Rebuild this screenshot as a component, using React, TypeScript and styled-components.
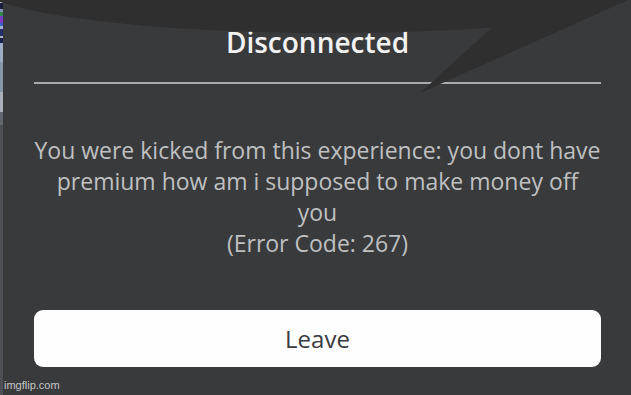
import React from "react";
import styled, { createGlobalStyle } from "styled-components";

const GlobalStyle = createGlobalStyle`
  html, body {
    margin: 0;
    padding: 0;
    background: #393a3c;
  }
`;

const Screen = styled.div`
  position: relative;
  width: 631px;
  height: 395px;
  overflow: hidden;
  display: flex;
  background: #393a3c;
  font-family: "Open Sans", "Noto Sans", sans-serif;
`;

const EdgeStrip = styled.div`
  width: 3px;
  flex-shrink: 0;
  background: linear-gradient(
    to bottom,
    #d6dbe6 0px, #d6dbe6 3px,
    #1c1c3c 3px, #1c1c3c 9px,
    #8292b2 9px, #8292b2 12px,
    #2f8a48 12px, #2f8a48 16px,
    #7a3cc4 16px, #7a3cc4 23px,
    #3a62c2 23px, #3a62c2 26px,
    #a4b2d0 26px, #a4b2d0 29px,
    #22306e 29px, #22306e 36px,
    #a6b4cc 36px, #a6b4cc 38px,
    #1c2250 38px, #1c2250 43px,
    #9eaec6 43px, #9eaec6 62px,
    #8896aa 62px, #8896aa 92px,
    #a9b0bc 92px, #a9b0bc 112px,
    #62666f 112px, #62666f 125px,
    #4d5056 125px, #4d5056 395px
  );
`;

const Dialog = styled.div`
  flex: 1;
  display: flex;
  flex-direction: column;
  padding: 24px 30px 0 31px;
`;

const Title = styled.h1`
  margin: 0;
  font-size: 28px;
  line-height: 37px;
  font-weight: 600;
  color: #f2f2f2;
  text-align: center;
`;

const Divider = styled.div`
  height: 2px;
  margin-top: 21px;
  background: #a9aaab;
`;

const Message = styled.p`
  margin: 51px 0 0;
  font-size: 23px;
  line-height: 31px;
  font-weight: 400;
  color: #bfc0c1;
  text-align: center;
  white-space: nowrap;
`;

const LeaveButton = styled.button`
  margin-top: 51px;
  height: 57px;
  border: none;
  border-radius: 9px;
  background: #fefefe;
  color: #393b3d;
  font-family: "Open Sans", "Noto Sans", sans-serif;
  font-size: 24px;
  line-height: 57px;
  padding: 0;
  cursor: pointer;
`;

const Bubble = styled.svg`
  position: absolute;
  left: 0;
  top: 0;
  width: 631px;
  height: 395px;
  pointer-events: none;
`;

const Watermark = styled.span`
  position: absolute;
  left: 4px;
  bottom: 3px;
  font-family: "Liberation Sans", Arial, sans-serif;
  font-size: 11px;
  line-height: 13px;
  color: rgba(225, 225, 225, 0.85);
`;

export default function App() {
  return (
    <>
      <GlobalStyle />
      <Screen>
        <EdgeStrip />
        <Dialog>
          <Title>Disconnected</Title>
          <Divider />
          <Message>
            You were kicked from this experience: you dont have
            <br />
            premium how am i supposed to make money off
            <br />
            you
            <br />
            (Error Code: 267)
          </Message>
          <LeaveButton>Leave</LeaveButton>
        </Dialog>
        <Bubble viewBox="0 0 631 395">
          <path
            d="M0 0 L0 2 A360 52 0 0 0 492 27.4 L420 93 L628 0 Z"
            fill="#2f2f30"
          />
        </Bubble>
        <Watermark>imgflip.com</Watermark>
      </Screen>
    </>
  );
}
